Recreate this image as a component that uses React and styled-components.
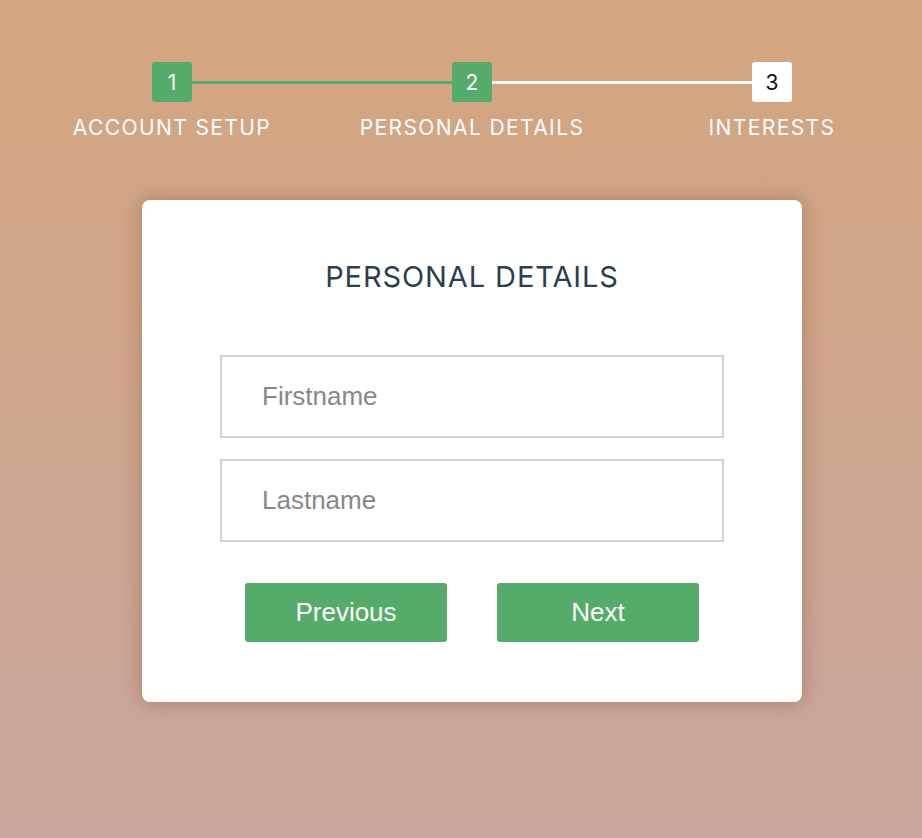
import React, { useState } from 'react';
import styled, { createGlobalStyle } from 'styled-components';

const GlobalStyle = createGlobalStyle`
  html, body {
    margin: 0;
    padding: 0;
  }
  body {
    min-height: 838px;
    background: linear-gradient(180deg, #d4a57e 0%, #c9a59d 100%);
    font-family: "Inter", "Liberation Sans", sans-serif;
  }
`;

const Page = styled.div`
  width: 900px;
  margin-left: 22px;
  padding-top: 62px;
  padding-bottom: 136px;
`;

const Progress = styled.div`
  display: flex;
  align-items: center;
  padding: 0 130px;
`;

const StepBox = styled.div`
  width: 40px;
  height: 40px;
  flex: none;
  border-radius: 3px;
  display: flex;
  align-items: center;
  justify-content: center;
  font-size: 21px;
  background: ${(p) => (p.$done ? '#55ab69' : '#ffffff')};
  color: ${(p) => (p.$done ? '#ffffff' : '#111111')};
`;

const Connector = styled.div`
  flex: 1;
  height: 3px;
  background: ${(p) => (p.$done ? '#55ab69' : '#ffffff')};
`;

const Labels = styled.div`
  display: grid;
  grid-template-columns: repeat(3, 300px);
  margin-top: 14px;
`;

const Label = styled.div`
  text-align: center;
  color: #ffffff;
  font-size: 21px;
  line-height: 24px;
  letter-spacing: 1.4px;
  text-transform: uppercase;
`;

const Card = styled.form`
  width: 660px;
  box-sizing: border-box;
  margin: 60px auto 0;
  background: #ffffff;
  border-radius: 8px;
  box-shadow: 0 0 18px rgba(90, 50, 30, 0.35);
  padding: 60px 0 60px;
  display: flex;
  flex-direction: column;
  align-items: center;
`;

const Title = styled.h2`
  margin: 0 0 61px;
  font-size: 29px;
  line-height: 34px;
  font-weight: 400;
  letter-spacing: 0.9px;
  color: #2c3e50;
  text-transform: uppercase;
`;

const Input = styled.input`
  width: 504px;
  height: 83px;
  box-sizing: border-box;
  border: 2px solid #d2d2d2;
  border-radius: 0;
  padding: 0 40px;
  margin-bottom: 21px;
  font-family: "Liberation Sans", Arial, sans-serif;
  font-size: 26px;
  color: #333;
  outline: none;

  &::placeholder {
    color: #888888;
  }
`;

const Actions = styled.div`
  display: flex;
  gap: 50px;
  margin-top: 20px;
`;

const Button = styled.button`
  width: 202px;
  height: 59px;
  border: none;
  border-radius: 3px;
  background: #55ab69;
  color: #ffffff;
  font-family: "Liberation Sans", Arial, sans-serif;
  font-size: 26px;
  cursor: pointer;
`;

const steps = ['Account Setup', 'Personal Details', 'Interests'];

export default function App() {
  const [current] = useState(1);
  const [first, setFirst] = useState('');
  const [last, setLast] = useState('');

  return (
    <>
      <GlobalStyle />
      <Page>
        <Progress>
          {steps.map((s, i) => (
            <React.Fragment key={s}>
              {i > 0 && <Connector $done={i <= current} />}
              <StepBox $done={i <= current}>{i + 1}</StepBox>
            </React.Fragment>
          ))}
        </Progress>
        <Labels>
          {steps.map((s) => (
            <Label key={s}>{s}</Label>
          ))}
        </Labels>
        <Card onSubmit={(e) => e.preventDefault()}>
          <Title>Personal Details</Title>
          <Input
            placeholder="Firstname"
            value={first}
            onChange={(e) => setFirst(e.target.value)}
          />
          <Input
            placeholder="Lastname"
            value={last}
            onChange={(e) => setLast(e.target.value)}
          />
          <Actions>
            <Button type="button">Previous</Button>
            <Button type="submit">Next</Button>
          </Actions>
        </Card>
      </Page>
    </>
  );
}
